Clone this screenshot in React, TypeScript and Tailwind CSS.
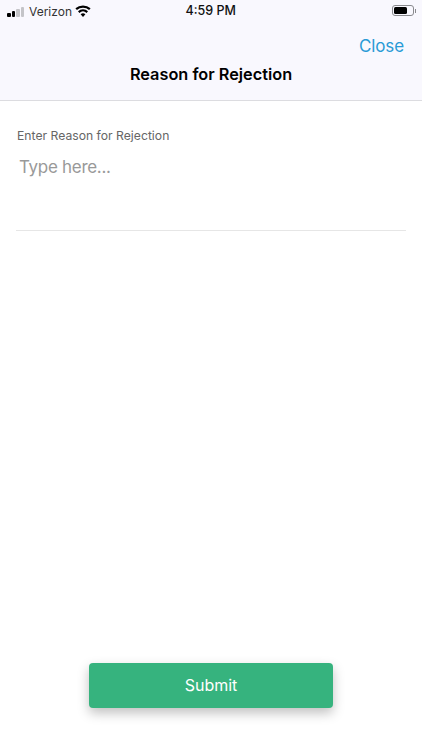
import React from "react";

const StatusBar = () => {
  return (
    <div className="h-[23px] relative flex items-center justify-between pl-[7px] pr-[6px] text-[12px] text-[#111]">
      <div className="flex items-center">
        <div className="flex items-end gap-[1px] h-[10px] w-[18px]">
          <span className="w-[3.5px] h-[4px] rounded-[1px] bg-black" />
          <span className="w-[3.5px] h-[6px] rounded-[1px] bg-black" />
          <span className="w-[3.5px] h-[8px] rounded-[1px] bg-[#c4c4c8]" />
          <span className="w-[3.5px] h-[10px] rounded-[1px] bg-[#c4c4c8]" />
        </div>
        <span className="ml-[4px] text-[#333]">Verizon</span>
        <svg className="ml-[3px] -mt-[2px]" width="16" height="12" viewBox="0 0 16 12">
          <path d="M8 12 L5.6 9.2 A3.6 3.6 0 0 1 10.4 9.2 Z" fill="#000" />
          <path d="M4.4 7.9 L3 6.3 A7.4 7.4 0 0 1 13 6.3 L11.6 7.9 A5.4 5.4 0 0 0 4.4 7.9 Z" fill="#000" />
          <path d="M1.9 5 L0.4 3.3 A11.4 11.4 0 0 1 15.6 3.3 L14.1 5 A9.2 9.2 0 0 0 1.9 5 Z" fill="#000" />
        </svg>
      </div>
      <span className="absolute left-[185.5px] font-medium text-[12.5px]">4:59 PM</span>
      <div className="flex items-center -mt-[2px]">
        <div className="w-[22px] h-[11px] rounded-[3px] border border-[#8a8a8e] p-[1px] flex">
          <div className="w-[13px] h-full rounded-[1.5px] bg-black" />
        </div>
        <div className="w-[1px] h-[4px] ml-[1px] bg-[#8a8a8e]" />
      </div>
    </div>
  );
};

export default function App() {
  return (
    <div
      className="w-[422px] h-[750px] bg-white flex flex-col"
      style={{ fontFamily: '"Inter", "Liberation Sans", sans-serif' }}
    >
      <div className="bg-[#f9f8fe] border-b border-[#dcdce0] h-[101px] shrink-0">
        <StatusBar />
        <div className="flex justify-end pr-[18px] pt-[11px] h-[35px]">
          <span className="text-[#2a9bd6] text-[17px] tracking-[-0.1px] leading-[24px]">Close</span>
        </div>
        <div className="text-center font-semibold text-[16.3px] leading-[22px] text-black mt-[5px]">
          Reason for Rejection
        </div>
      </div>

      <div className="flex-1 flex flex-col px-[16px]">
        <div className="pt-[27px] pl-[1px] text-[12.2px] leading-[16px] text-[#666]">Enter Reason for Rejection</div>
        <div className="border-b border-[#e6e6e6] h-[87px] pl-[3px] pt-[11px] text-[17px] tracking-[-0.3px] leading-[24px] text-[#999]">
          Type here...
        </div>
        <div className="flex-1" />
        <div className="flex justify-center pb-[42px]">
          <button className="w-[244px] h-[45px] pb-[2px] rounded-[4px] bg-[#36b37e] text-white text-[16px] shadow-[0_5px_12px_rgba(0,0,0,0.25)]">
            Submit
          </button>
        </div>
      </div>
    </div>
  );
}
